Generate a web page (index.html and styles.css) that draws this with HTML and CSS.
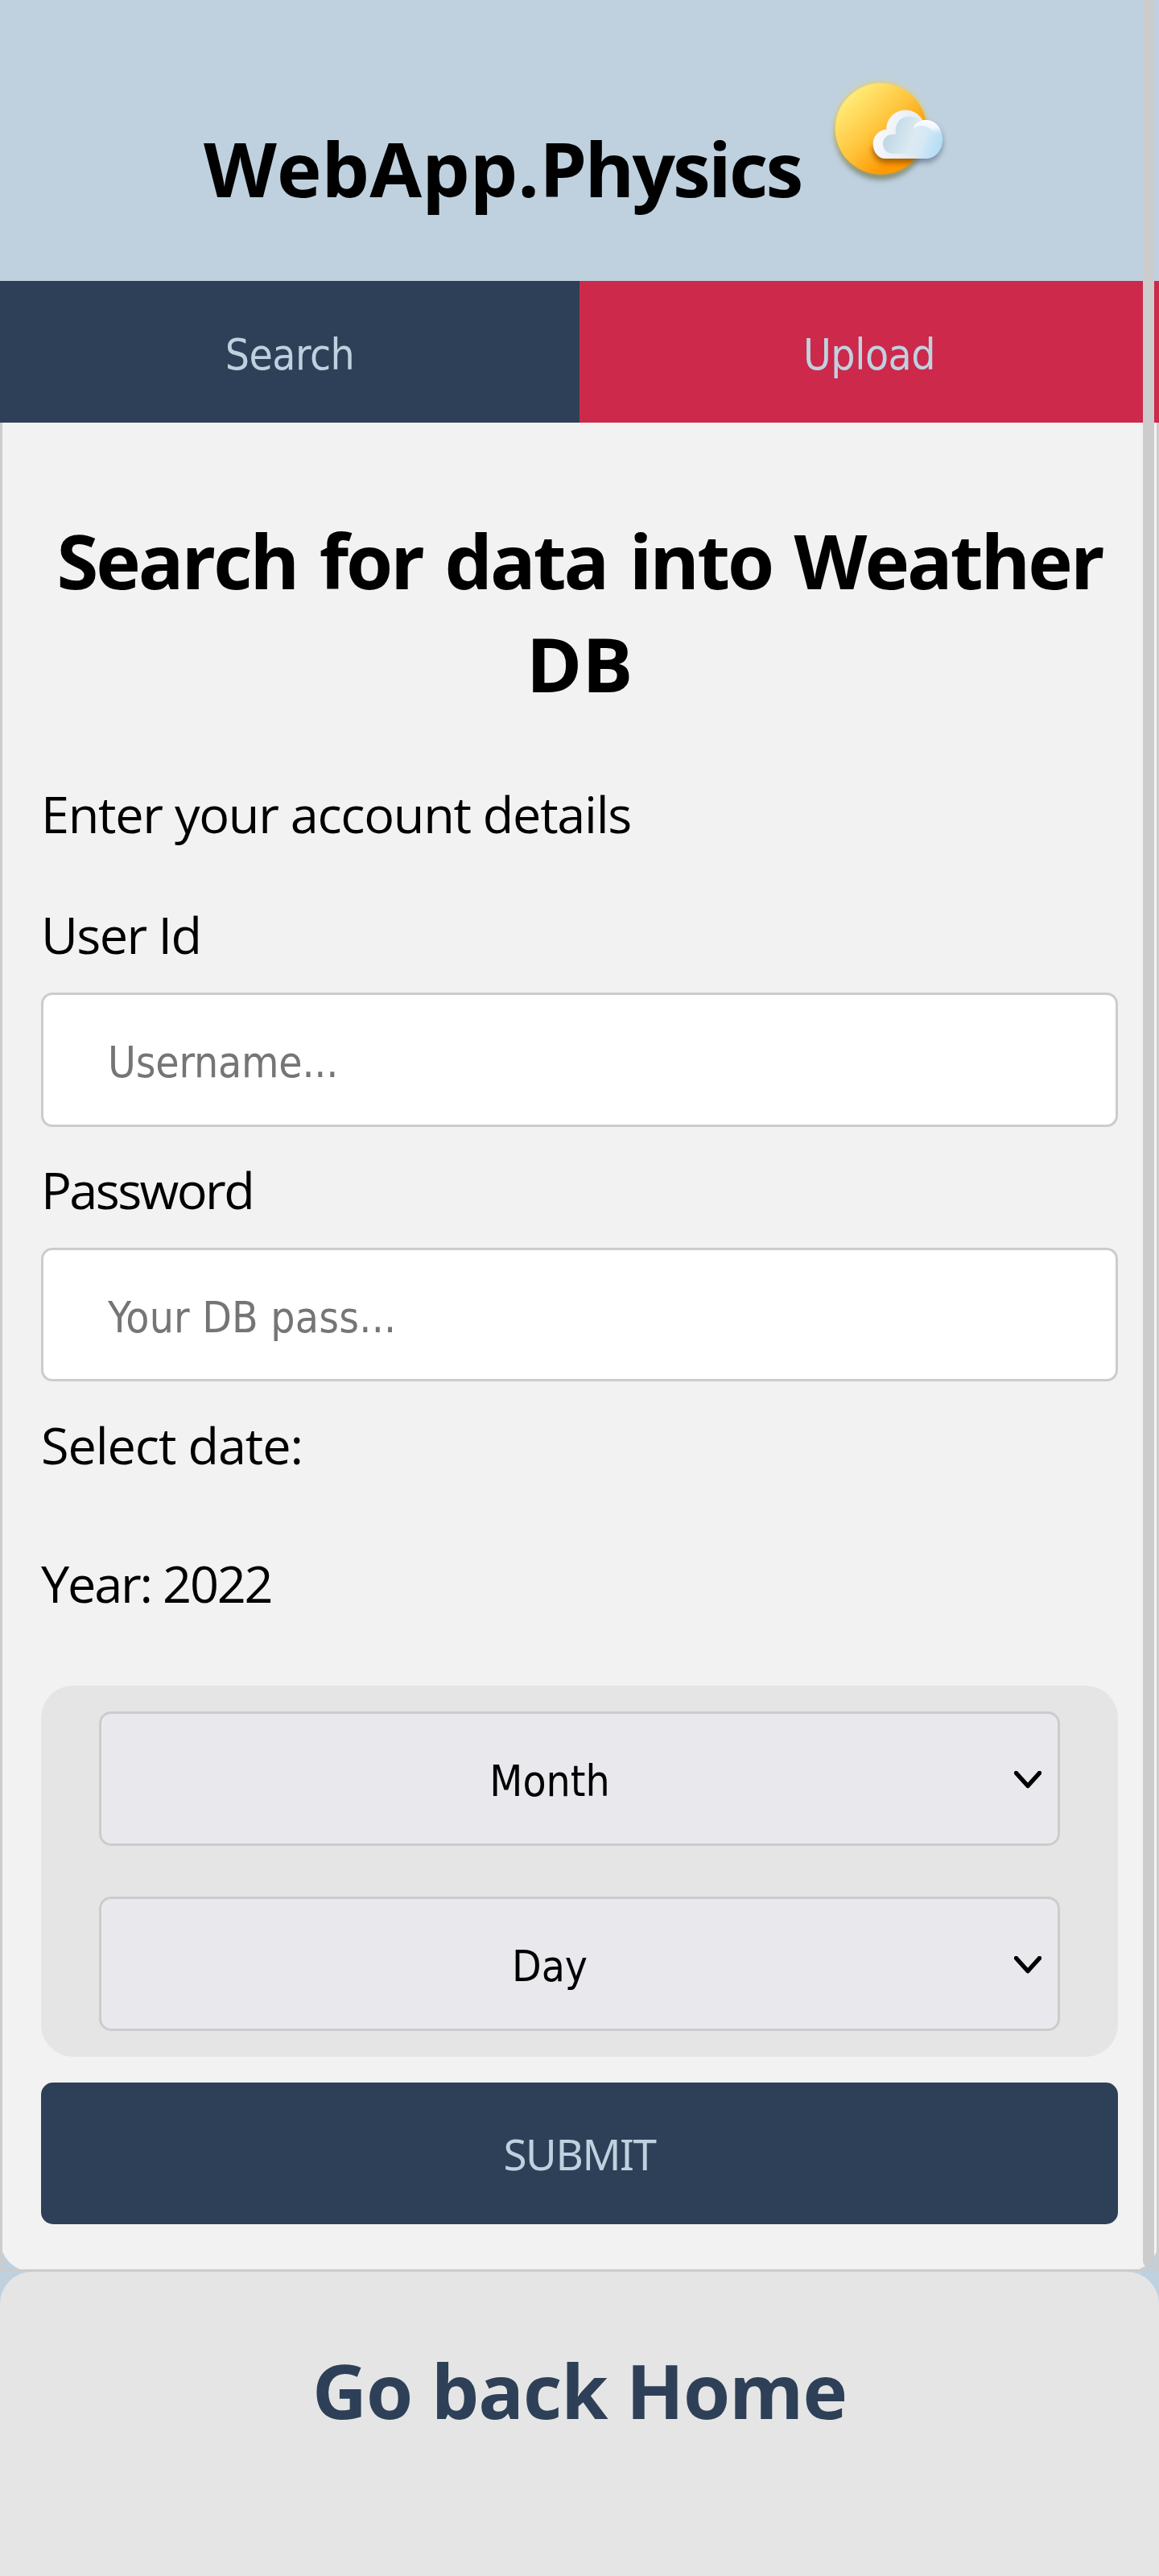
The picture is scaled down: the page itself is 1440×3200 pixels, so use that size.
FILE: index.html
```html
<!DOCTYPE html>
<html lang="en">
<head>
<meta charset="utf-8">
<title>WebApp.Physics</title>
<link rel="stylesheet" href="styles.css">
</head>
<body>
<header class="header">
  <div class="brand">WebApp.<span class="brand-tail">Physics</span></div>
  <svg class="logo" viewBox="0 0 660 540" aria-hidden="true">
    <defs>
      <linearGradient id="sun" gradientUnits="userSpaceOnUse" x1="165" y1="160" x2="385" y2="390">
        <stop offset="0" stop-color="#ffe974"/><stop offset=".45" stop-color="#ffc63f"/><stop offset=".85" stop-color="#ff9b04"/><stop offset="1" stop-color="#ff9800"/>
      </linearGradient>
      <linearGradient id="rim" gradientUnits="userSpaceOnUse" x1="280" y1="250" x2="514" y2="330">
        <stop offset="0" stop-color="#f8f9fc"/><stop offset=".4" stop-color="#e9f0f6"/><stop offset=".65" stop-color="#dceaf3"/><stop offset="1" stop-color="#b0dcf8"/>
      </linearGradient>
      <linearGradient id="core" gradientUnits="userSpaceOnUse" x1="310" y1="270" x2="500" y2="340">
        <stop offset="0" stop-color="#bfd7e5"/><stop offset=".5" stop-color="#dceaf2"/><stop offset=".7" stop-color="#d5e8f4"/><stop offset="1" stop-color="#b0dcf8"/>
      </linearGradient>
      <linearGradient id="shine" x1="0" y1="0" x2="0" y2="1">
        <stop offset="0" stop-color="#fbfcfe"/><stop offset=".5" stop-color="#f4f8fc"/><stop offset="1" stop-color="#d0e9fa" stop-opacity="0"/>
      </linearGradient>
      <clipPath id="disc"><circle cx="283" cy="270" r="170"/></clipPath>
      <filter id="soft" x="-30%" y="-30%" width="160%" height="160%"><feGaussianBlur stdDeviation="11"/></filter>
    </defs>
    <circle cx="283" cy="290" r="168" fill="#5f6a5c" opacity=".8" filter="url(#soft)"/>
    <circle cx="283" cy="268" r="172" fill="#edcf4e" opacity=".75" filter="url(#soft)"/>
    <path d="M300 392C274 392 258 368 258 338C258 310 275 286 304 284L438 249C484 244 514 280 514 320C514 362 486 396 452 396Z" fill="#4a5f70" opacity=".6" filter="url(#soft)"/>
    <circle cx="283" cy="270" r="170" fill="url(#sun)"/>
    <g clip-path="url(#disc)"><path d="M300 396C270 396 252 370 252 340L300 300H460L490 396Z" fill="#8a4a00" opacity=".75" filter="url(#soft)"/></g>
    <path d="M300 381C274 381 254 356 254 326C254 298 275 274 304 272C304 232 334 200 376 200C402 200 426 214 438 237C482 233 514 268 514 308C514 350 486 381 452 381Z" fill="url(#rim)"/>
    <path d="M330 363C306 363 291 346 291 326C291 304 310 287 339 291C334 250 356 224 388 224C408 224 424 232 430 239C460 250 480 270 480 310C480 345 460 363 440 363Z" fill="url(#core)"/>
    <path d="M402 270C412 245 435 236 455 237C485 239 505 262 511 290C490 298 476 284 466 270C445 252 420 256 402 270Z" fill="url(#shine)"/>
  </svg>
</header>
<nav class="tabs">
  <a class="tab tab-search">Search</a>
  <a class="tab tab-upload">Upload</a>
</nav>
<main class="panel">
  <h1 class="title">Search for data into Weather <span class="db">DB</span></h1>
  <p class="text intro">Enter your account details</p>
  <label class="text user-label" for="user">User Id</label>
  <input class="field user" id="user" type="text" placeholder="Username...">
  <label class="text pass-label" for="pass">Password</label>
  <input class="field pass" id="pass" type="text" placeholder="Your DB pass...">
  <p class="text date-label">Select date:</p>
  <p class="text year">Year: 2022</p>
  <div class="selects">
    <div class="select"><span>Month</span><svg class="chevron" viewBox="0 0 34 22"><path d="M2.5 2.5L17 18.5L31.5 2.5"/></svg></div>
    <div class="select"><span>Day</span><svg class="chevron" viewBox="0 0 34 22"><path d="M2.5 2.5L17 18.5L31.5 2.5"/></svg></div>
  </div>
  <button class="submit">SUBMIT</button>
</main>
<footer class="footer"><a class="home">Go back Home</a></footer>
<div class="scroll-thumb"></div>
</body>
</html>
```
FILE: styles.css
```css
* { box-sizing: border-box; }
body {
  margin: 0;
  min-height: 3200px;
  position: relative;
  display: flex;
  flex-direction: column;
  background: #bfd1df;
  color: #000;
  font-family: "Open Sans", "Noto Sans", sans-serif;
}
.header { display: flex; height: 349px; padding-left: 253px; }
.brand {
  width: 747px;
  padding-top: 145px;
  font-size: 94px;
  font-weight: 700;
  line-height: 128px;
  letter-spacing: .1px;
  white-space: nowrap;
}
.brand-tail { letter-spacing: -2.8px; }
.logo { width: 220px; height: 180px; margin-top: 70px; }

.tabs { display: flex; height: 176px; }
.tab {
  flex: 1;
  display: flex;
  align-items: center;
  justify-content: center;
  padding-top: 6px;
  color: #bfd1df;
  font: 53px "DejaVu Sans Condensed", "DejaVu Sans", sans-serif;
  letter-spacing: -.5px;
}
.tab-search { background: #2e4057; }
.tab-upload { background: #cc294b; }

.panel {
  position: relative;
  display: flex;
  flex-direction: column;
  height: 2297px;
  padding: 107px 51px 0;
  background: #f2f2f2;
  border-radius: 0 0 40px 40px;
}
.panel::after {
  content: "";
  position: absolute;
  inset: 0;
  border: 3px solid #ccc;
  border-top: 0;
  pointer-events: none;
}
.title {
  margin: 0 -10px;
  font-size: 94px;
  line-height: 128px;
  letter-spacing: -3px;
  word-spacing: 6px;
  text-align: center;
}
.db { letter-spacing: 0; }
.text { margin: 0; font-size: 63px; line-height: 88px; }
.intro { margin-top: 79px; letter-spacing: -1.28px; }
.user-label { margin-top: 62px; letter-spacing: -1.6px; }
.pass-label { margin-top: 34px; letter-spacing: -2.6px; }
.date-label { margin-top: 35px; letter-spacing: -1.1px; }
.year { margin-top: 84px; letter-spacing: -2.2px; }

.field {
  width: 100%;
  height: 167px;
  margin: 28px 0 0;
  padding: 6px 80px 0;
  border: 3px solid #ccc;
  border-radius: 14px;
  background: #fff;
  font: 53px "DejaVu Sans Condensed", "DejaVu Sans", sans-serif;
  letter-spacing: -.2px;
}
.field::placeholder { color: #757575; opacity: 1; }
.pass { height: 166px; letter-spacing: .2px; }

.selects {
  display: flex;
  flex-direction: column;
  gap: 63px;
  margin-top: 83px;
  padding: 32px 72px;
  border-radius: 40px;
  background: #e5e5e5;
}
.select {
  display: flex;
  align-items: center;
  height: 167px;
  padding-right: 20px;
  border: 3px solid #ccc;
  border-radius: 15px;
  background: #e9e9ed;
  font: 53px "DejaVu Sans Condensed", "DejaVu Sans", sans-serif;
}
.select span { flex: 1; padding: 6px 20px 0 0; text-align: center; }
.chevron { width: 34px; height: 22px; margin-top: 3px; fill: none; stroke: #000; stroke-width: 5.5; stroke-linejoin: round; stroke-linecap: round; }

.submit {
  height: 176px;
  margin: 32px 0 0;
  padding: 1px 0 0;
  border: 0;
  border-radius: 15px;
  background: #2e4057;
  color: #bfd1df;
  font: 53px "Noto Sans", sans-serif;
  letter-spacing: -1.45px;
}

.footer {
  flex: 1;
  padding-top: 83px;
  border-radius: 40px 40px 0 0;
  background: #e5e5e5;
  text-align: center;
}
.home {
  color: #2e4057;
  font-size: 94px;
  font-weight: 700;
  line-height: 128px;
  letter-spacing: -1px;
}
.scroll-thumb {
  position: absolute;
  top: 0;
  right: 6px;
  width: 14px;
  height: 2816px;
  border-radius: 0 0 7px 7px;
  background: #ccc;
}
```
